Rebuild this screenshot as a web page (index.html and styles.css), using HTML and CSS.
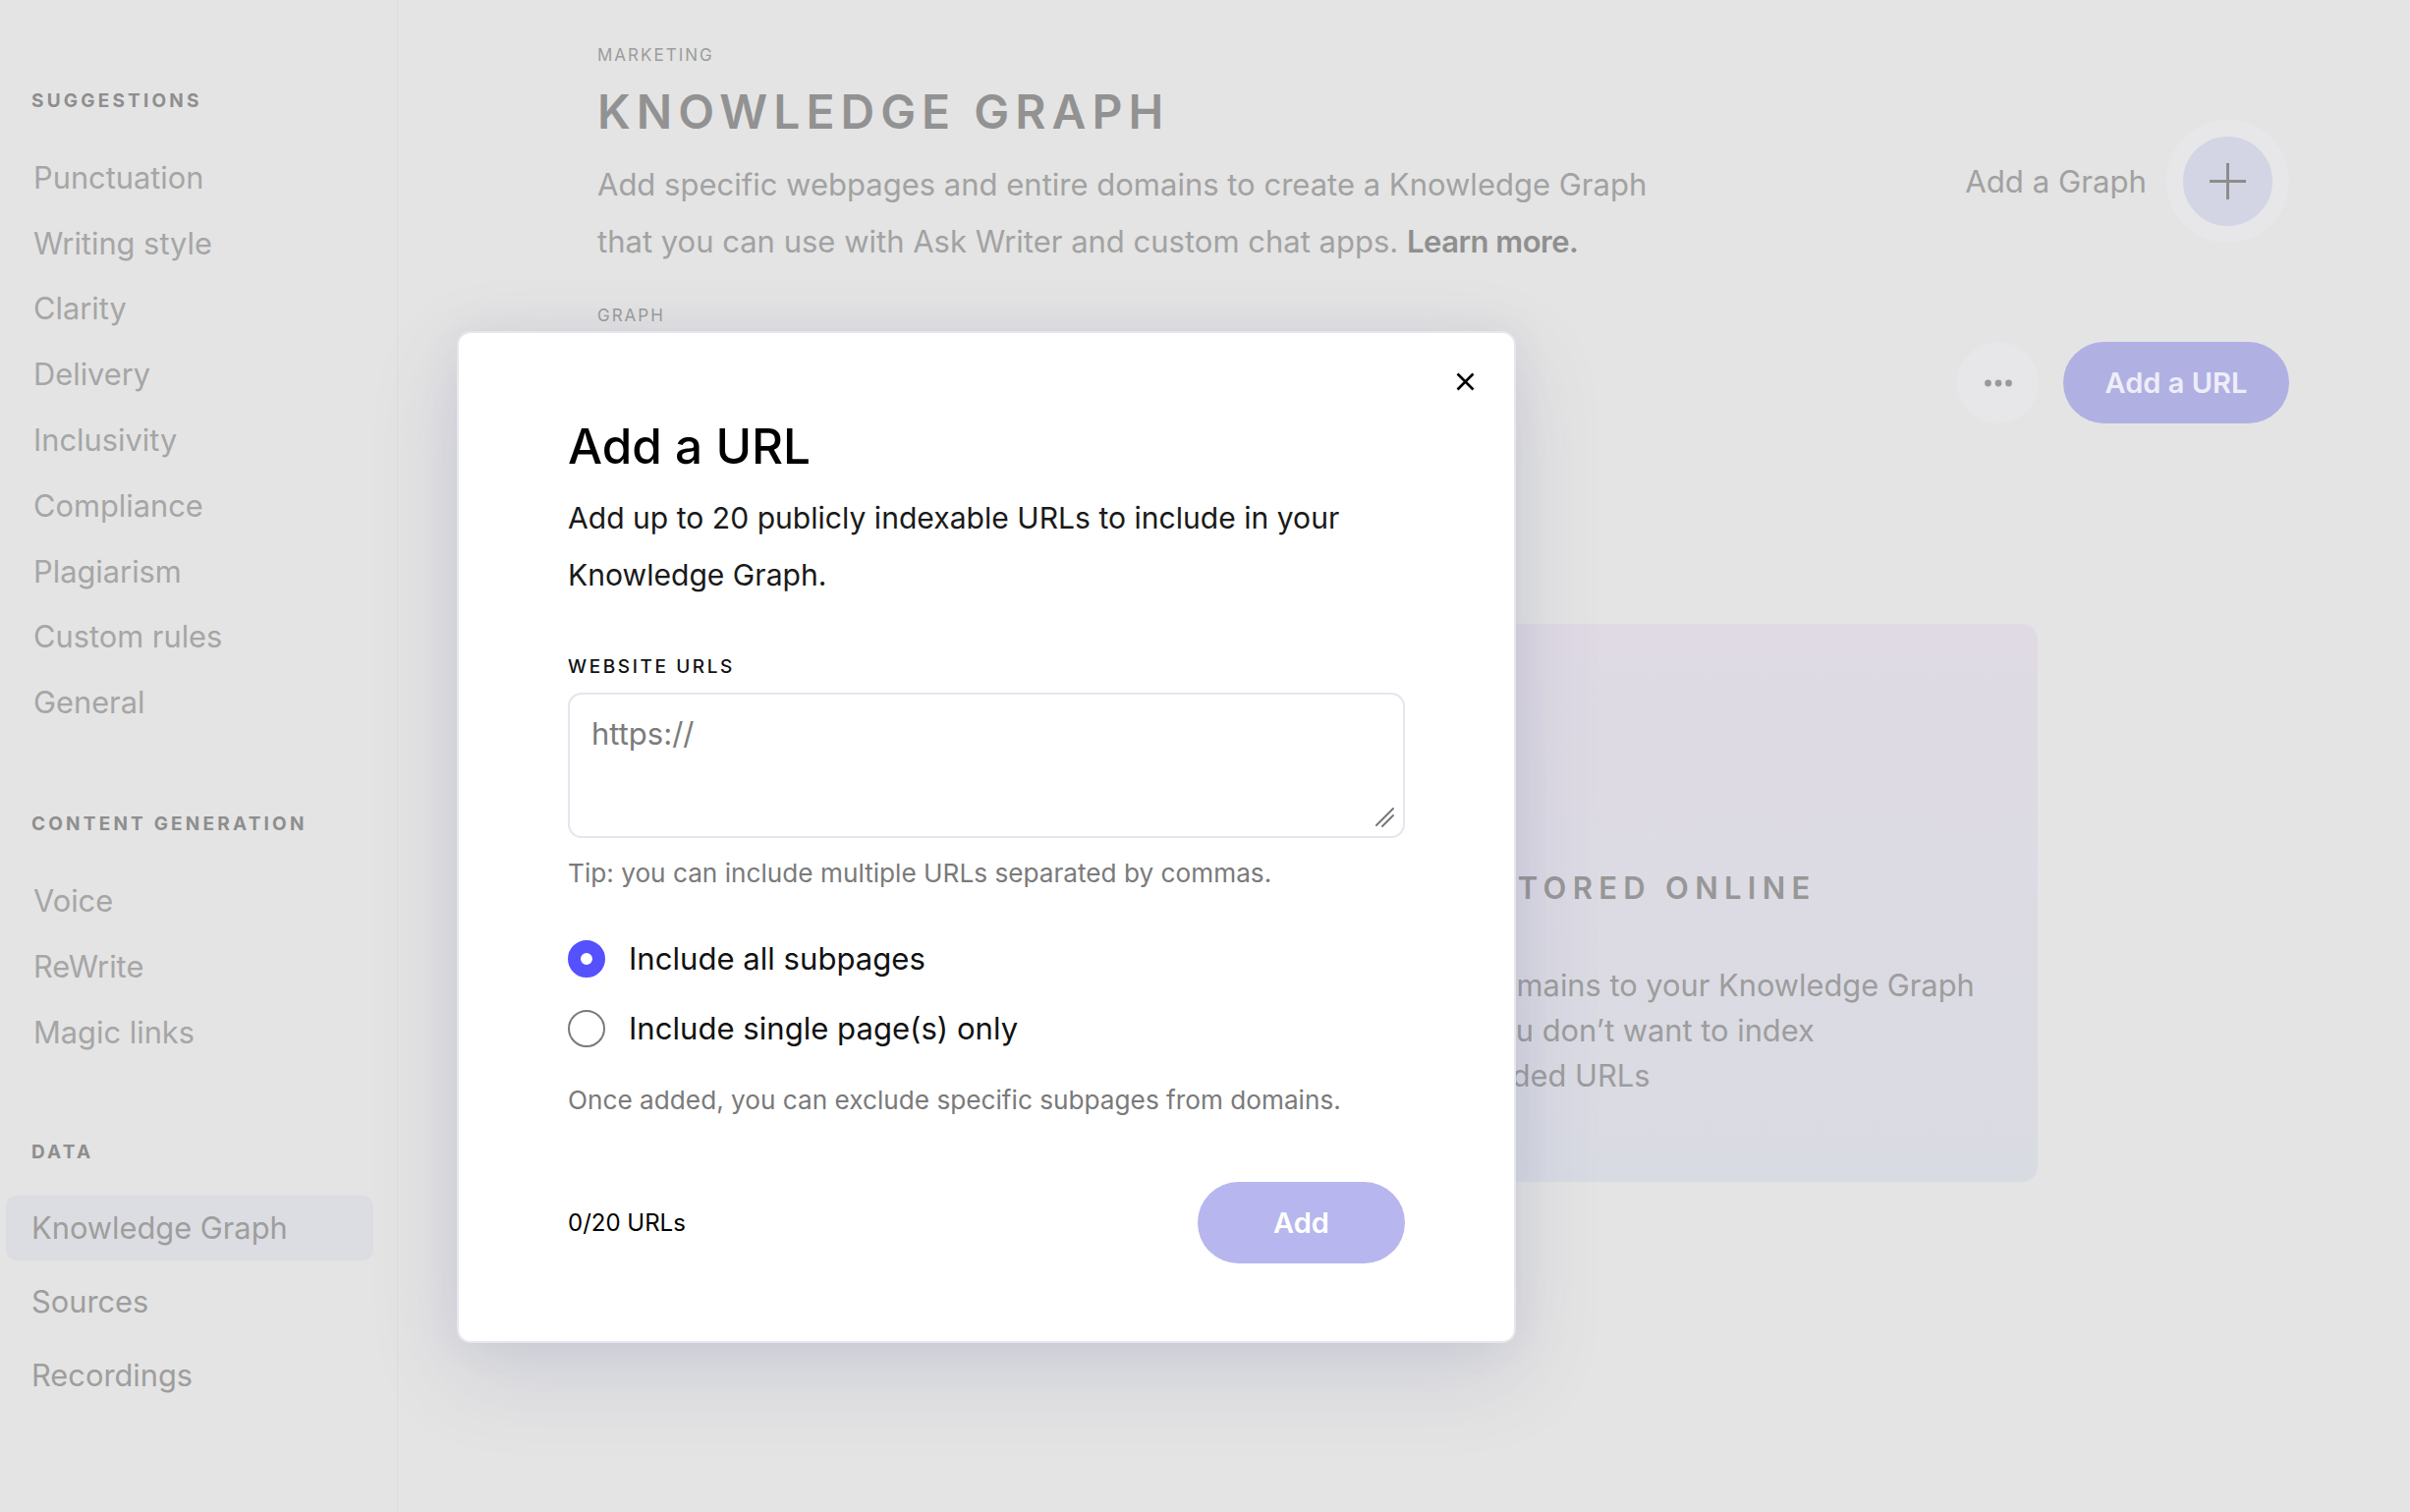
FILE: index.html
```html
<!DOCTYPE html>
<html lang="en">
<head>
<meta charset="utf-8">
<title>Knowledge Graph</title>
<link rel="stylesheet" href="styles.css">
</head>
<body>
<div class="app">
  <aside class="sidebar">
    <section class="nav-section">
      <h2 class="nav-heading">SUGGESTIONS</h2>
      <ul class="nav-list">
        <li class="nav-item">Punctuation</li>
        <li class="nav-item">Writing style</li>
        <li class="nav-item">Clarity</li>
        <li class="nav-item">Delivery</li>
        <li class="nav-item">Inclusivity</li>
        <li class="nav-item">Compliance</li>
        <li class="nav-item">Plagiarism</li>
        <li class="nav-item">Custom rules</li>
        <li class="nav-item">General</li>
      </ul>
    </section>
    <section class="nav-section">
      <h2 class="nav-heading">CONTENT GENERATION</h2>
      <ul class="nav-list">
        <li class="nav-item">Voice</li>
        <li class="nav-item">ReWrite</li>
        <li class="nav-item">Magic links</li>
      </ul>
    </section>
    <section class="nav-section nav-section--data">
      <h2 class="nav-heading">DATA</h2>
      <ul class="nav-list">
        <li class="nav-item is-active">Knowledge Graph</li>
        <li class="nav-item">Sources</li>
        <li class="nav-item">Recordings</li>
      </ul>
    </section>
  </aside>

  <main class="main">
    <header class="page-head">
      <div class="head-text">
        <p class="eyebrow">MARKETING</p>
        <h1 class="page-title">KNOWLEDGE GRAPH</h1>
        <p class="page-desc">Add specific webpages and entire domains to create a Knowledge Graph that you can use with Ask Writer and custom chat apps. <a class="learn-more" href="#">Learn more.</a></p>
      </div>
      <div class="head-actions">
        <span class="head-actions__label">Add a Graph</span>
        <button class="fab" type="button" aria-label="Add a Graph">
          <svg width="37" height="37" viewBox="0 0 37 37"><path d="M18.5 0v37M0 18.5h37" stroke="#8d8d8d" stroke-width="3" fill="none"/></svg>
        </button>
      </div>
    </header>

    <section class="graph-section">
      <p class="eyebrow">GRAPH</p>
      <div class="toolbar">
        <button class="btn-more" type="button" aria-label="More">
          <svg width="28" height="8" viewBox="0 0 28 8"><circle cx="3.5" cy="4" r="3.4" fill="#9a9a9a"/><circle cx="14" cy="4" r="3.4" fill="#9a9a9a"/><circle cx="24.5" cy="4" r="3.4" fill="#9a9a9a"/></svg>
        </button>
        <button class="btn-url" type="button">Add a URL</button>
      </div>

      <div class="empty-card">
        <div class="empty-art"></div>
        <div class="empty-body">
          <h3 class="empty-title">ALL CONTENT STORED ONLINE</h3>
          <ul class="empty-list">
            <li>Add webpages and domains to your Knowledge Graph</li>
            <li>Exclude web pages you don’t want to index</li>
            <li>Review and sync included URLs</li>
          </ul>
        </div>
      </div>
    </section>
  </main>

  <div class="modal" role="dialog" aria-labelledby="modal-title">
    <button class="modal-close" type="button" aria-label="Close">
      <svg width="19" height="19" viewBox="0 0 19 19"><path d="M1.5 1.5l16 16M17.5 1.5l-16 16" stroke="#000" stroke-width="2.6" fill="none"/></svg>
    </button>
    <h2 class="modal-title" id="modal-title">Add a URL</h2>
    <p class="modal-desc">Add up to 20 publicly indexable URLs to include in your Knowledge Graph.</p>
    <label class="field-label" for="urls">WEBSITE URLS</label>
    <div class="input-wrap">
      <textarea class="url-input" id="urls" placeholder="https://"></textarea>
      <svg class="resize-grip" width="22" height="22" viewBox="0 0 22 22" aria-hidden="true"><path d="M2 19L19 2M8 20L19 9" stroke="#777" stroke-width="2" stroke-linecap="round" fill="none"/></svg>
    </div>
    <p class="hint">Tip: you can include multiple URLs separated by commas.</p>
    <div class="radio-group">
      <label class="radio-row"><input class="radio" type="radio" name="scope" checked><span>Include all subpages</span></label>
      <label class="radio-row"><input class="radio" type="radio" name="scope"><span>Include single page(s) only</span></label>
    </div>
    <p class="hint hint--note">Once added, you can exclude specific subpages from domains.</p>
    <div class="modal-footer">
      <span class="url-count">0/20 URLs</span>
      <button class="btn-add" type="button">Add</button>
    </div>
  </div>
</div>
</body>
</html>
```
FILE: styles.css
```css
* { box-sizing: border-box; }

html, body {
  margin: 0;
  padding: 0;
}

body {
  width: 2453px;
  height: 1539px;
  overflow: hidden;
  background: #e4e4e4;
  font-family: Inter, "Noto Sans", sans-serif;
  color: #111;
}

.app {
  position: relative;
  display: flex;
  height: 1539px;
}

/* ---------- Sidebar ---------- */
.sidebar {
  width: 405px;
  flex: none;
  border-right: 1px solid #dddddf;
  padding: 91px 24px 0 6px;
}

.nav-section + .nav-section { margin-top: 79px; }
.nav-section--data.nav-section { margin-top: 77px; }

.nav-heading {
  margin: 0 0 32px;
  padding-left: 26px;
  font-size: 19px;
  line-height: 24px;
  font-weight: 700;
  letter-spacing: 3.2px;
  color: #8e8e8e;
}

.nav-list {
  list-style: none;
  margin: 0;
  padding: 0;
}

.nav-item {
  height: 66.8px;
  display: flex;
  align-items: center;
  padding-left: 28px;
  font-size: 30.8px;
  color: #a6a6a6;
}

.nav-section--data .nav-item {
  height: 66px;
  margin-bottom: 9px;
  padding-left: 26px;
  border-radius: 10px;
  color: #9e9e9e;
}

.nav-item.is-active { background: #dcdde2; }

/* ---------- Main ---------- */
.main {
  flex: 1;
  padding: 44px 123px 0 203px;
}

.page-head {
  display: flex;
  justify-content: space-between;
  align-items: flex-start;
}

.eyebrow {
  margin: 0;
  font-size: 17px;
  line-height: 24px;
  letter-spacing: 2px;
  color: #9c9c9c;
}

.page-title {
  margin: 16px 0 0;
  font-size: 48px;
  line-height: 60px;
  font-weight: 600;
  letter-spacing: 6px;
  color: #929292;
}

.page-desc {
  margin: 15px 0 0;
  max-width: 1100px;
  font-size: 31px;
  line-height: 58px;
  color: #a2a2a2;
}

.learn-more {
  font-weight: 600;
  letter-spacing: -0.5px;
  color: #8f8f8f;
  text-decoration: none;
}

.head-actions {
  display: flex;
  align-items: center;
  gap: 20px;
  margin-top: 78px;
  font-size: 31.2px;
  color: #a1a1a1;
}

.fab {
  width: 125px;
  height: 125px;
  padding: 0;
  border-radius: 50%;
  border: 17px solid #e7e7e9;
  background: #d3d5e4;
  display: grid;
  place-items: center;
}

.graph-section { margin-top: 34px; }

.toolbar {
  display: flex;
  justify-content: flex-end;
  gap: 25px;
  margin-top: 15px;
}

.btn-more {
  width: 83px;
  height: 83px;
  padding: 0;
  border: none;
  border-radius: 50%;
  background: #e7e7e9;
  display: grid;
  place-items: center;
}

.btn-url {
  width: 230px;
  height: 83px;
  border: none;
  border-radius: 42px;
  background: #b1b0e3;
  color: #eeeef8;
  font-family: inherit;
  font-size: 29px;
  font-weight: 600;
}

.empty-card {
  display: flex;
  width: 1466px;
  height: 568px;
  margin-top: 204px;
  padding-top: 249px;
  border-radius: 16px;
  background: linear-gradient(180deg, #dfdae4 0%, #d9dbe3 100%);
}

.empty-art {
  width: 608px;
  flex: none;
}

.empty-title {
  margin: 0 0 56px;
  font-size: 31px;
  line-height: 40px;
  font-weight: 600;
  letter-spacing: 6.3px;
  color: #979797;
}

.empty-list {
  list-style: none;
  margin: 0;
  padding: 0;
  font-size: 30.8px;
  line-height: 46px;
  color: #9d9d9d;
}

/* ---------- Modal ---------- */
.modal {
  position: absolute;
  left: 465px;
  top: 337px;
  width: 1078px;
  height: 1030px;
  padding: 85px 111px 0;
  background: #fff;
  border: 2px solid #e6e7ec;
  border-radius: 14px;
  box-shadow: 0 30px 90px rgba(80, 90, 140, 0.16), 0 0 40px rgba(80, 90, 140, 0.07);
}

.modal-close {
  position: absolute;
  top: 39px;
  right: 39px;
  width: 21px;
  height: 21px;
  padding: 1px;
  border: none;
  background: none;
  display: grid;
  place-items: center;
}

.modal-title {
  margin: 0;
  font-size: 49.5px;
  line-height: 60px;
  font-weight: 500;
  color: #000;
}

.modal-desc {
  margin: 14px 0 0;
  font-size: 30.1px;
  line-height: 58px;
  color: #1a1a1a;
}

.field-label {
  display: block;
  margin-top: 53px;
  font-size: 19px;
  line-height: 24px;
  font-weight: 500;
  letter-spacing: 2.6px;
  color: #111;
}

.input-wrap {
  position: relative;
  margin-top: 14px;
}

.url-input {
  display: block;
  width: 100%;
  height: 148px;
  padding: 20px 22px;
  border: 2px solid #e4e6ee;
  border-radius: 14px;
  font-family: inherit;
  font-size: 31px;
  line-height: 40px;
  color: #222;
  resize: none;
  outline: none;
}

.url-input::placeholder { color: #7b7b7b; }

.resize-grip {
  position: absolute;
  right: 9px;
  bottom: 10px;
}

.hint {
  margin: 18px 0 0;
  font-size: 26.2px;
  line-height: 36px;
  color: #7a7a7a;
}

.hint--note { margin-top: 30px; }

.radio-group {
  display: flex;
  flex-direction: column;
  gap: 21px;
  margin-top: 44px;
}

.radio-row {
  display: flex;
  align-items: center;
  gap: 24px;
  height: 50px;
  font-size: 31.1px;
  color: #111;
}

.radio {
  appearance: none;
  -webkit-appearance: none;
  width: 38px;
  height: 38px;
  margin: 0;
  border-radius: 50%;
  border: 2px solid #7a7a7a;
  background: #fff;
}

.radio:checked {
  border: 13.5px solid #5551ff;
}

.modal-footer {
  display: flex;
  justify-content: space-between;
  align-items: center;
  margin-top: 65px;
}

.url-count {
  font-size: 24px;
  color: #000;
}

.btn-add {
  width: 211px;
  height: 83px;
  border: none;
  border-radius: 42px;
  background: #b7b6ee;
  color: #fff;
  font-family: inherit;
  font-size: 29px;
  font-weight: 600;
}
```
